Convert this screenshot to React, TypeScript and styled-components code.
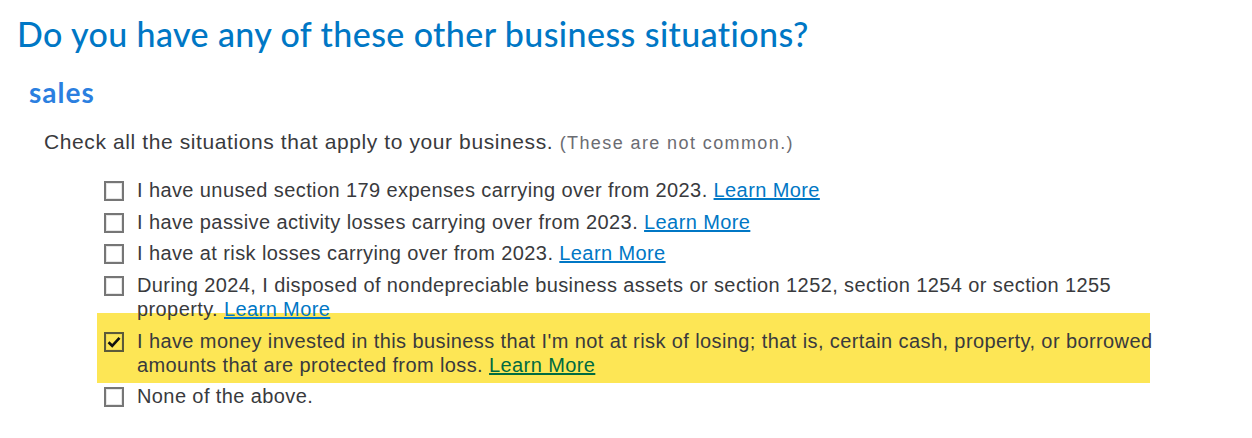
import React from "react";
import styled, { createGlobalStyle } from "styled-components";

const Global = createGlobalStyle`
  html, body { margin: 0; padding: 0; background: #fff; }
  body { font-family: "Liberation Sans", Arial, sans-serif; }
`;

const Page = styled.div`
  padding: 12px 0 0 17px;
`;

const Title = styled.h1`
  margin: 0;
  font-family: "Lato", "Open Sans", sans-serif;
  font-weight: 500;
  font-size: 34px;
  letter-spacing: 0.4px;
  line-height: 44px;
  color: #0077c5;
`;

const Section = styled.h2`
  margin: 18px 0 0 12px;
  font-family: "Lato", "Open Sans", sans-serif;
  font-weight: 700;
  font-size: 28px;
  letter-spacing: 1px;
  line-height: 36px;
  color: #2b7fe0;
`;

const Intro = styled.p`
  margin: 19px 0 0 27px;
  font-size: 21px;
  letter-spacing: 0.6px;
  line-height: 26px;
  color: #393a3d;
`;

const Note = styled.span`
  font-size: 18px;
  letter-spacing: 1.4px;
  color: #6b6c72;
`;

const List = styled.div`
  margin: 22px 0 0 87px;
`;

const Row = styled.div<{ $hl?: boolean }>`
  display: flex;
  align-items: flex-start;
  gap: 13px;
  font-size: 20px;
  letter-spacing: 0.4px;
  line-height: 24px;
  color: #393a3d;

  & + & {
    margin-top: 7.7px;
  }

  ${(p) =>
    p.$hl
      ? `
    background: #fde655;
    box-sizing: border-box;
    width: 1053px;
    && { margin-top: -8.3px; }
    margin-bottom: -6px;
    margin-left: -7px;
    padding: 16px 0 6px 7px;
  `
      : ""}
`;

const Box = styled.span<{ $checked?: boolean }>`
  flex: none;
  box-sizing: border-box;
  width: 20px;
  height: 20px;
  margin-top: 3px;
  border: 2px solid ${(p) => (p.$checked ? "#5c5a3a" : "#767676")};
  box-shadow: inset 0 0 0 1px ${(p) => (p.$checked ? "rgba(0,0,0,0.05)" : "#e6e6e6")};
  background: ${(p) => (p.$checked ? "transparent" : "#fff")};
  display: flex;
  align-items: center;
  justify-content: center;
`;

const Label = styled.span`
  flex: 0 0 auto;
  max-width: 1030px;
`;

const Link = styled.a<{ $onHl?: boolean }>`
  color: ${(p) => (p.$onHl ? "#006b41" : "#0077c5")};
  text-decoration: underline;
  cursor: pointer;
`;

const items = [
  "I have unused section 179 expenses carrying over from 2023.",
  "I have passive activity losses carrying over from 2023.",
  "I have at risk losses carrying over from 2023.",
  "During 2024, I disposed of nondepreciable business assets or section 1252, section 1254 or section 1255 property.",
  "I have money invested in this business that I'm not at risk of losing; that is, certain cash, property, or borrowed amounts that are protected from loss.",
];

export default function App() {
  return (
    <>
      <Global />
      <Page>
        <Title>Do you have any of these other business situations?</Title>
        <Section>sales</Section>
        <Intro>
          Check all the situations that apply to your business. <Note>(These are not common.)</Note>
        </Intro>
        <List>
          {items.map((t, i) => {
            const hl = i === 4;
            return (
              <Row key={i} $hl={hl}>
                <Box $checked={hl}>
                  {hl && (
                    <svg width="14" height="12" viewBox="0 0 14 12">
                      <path d="M1.5 6.2 L5.2 9.8 L12.5 1.8" fill="none" stroke="#111" strokeWidth="2.6" />
                    </svg>
                  )}
                </Box>
                <Label>
                  {t} <Link $onHl={hl}>Learn More</Link>
                </Label>
              </Row>
            );
          })}
          <Row>
            <Box />
            <Label>None of the above.</Label>
          </Row>
        </List>
      </Page>
    </>
  );
}
